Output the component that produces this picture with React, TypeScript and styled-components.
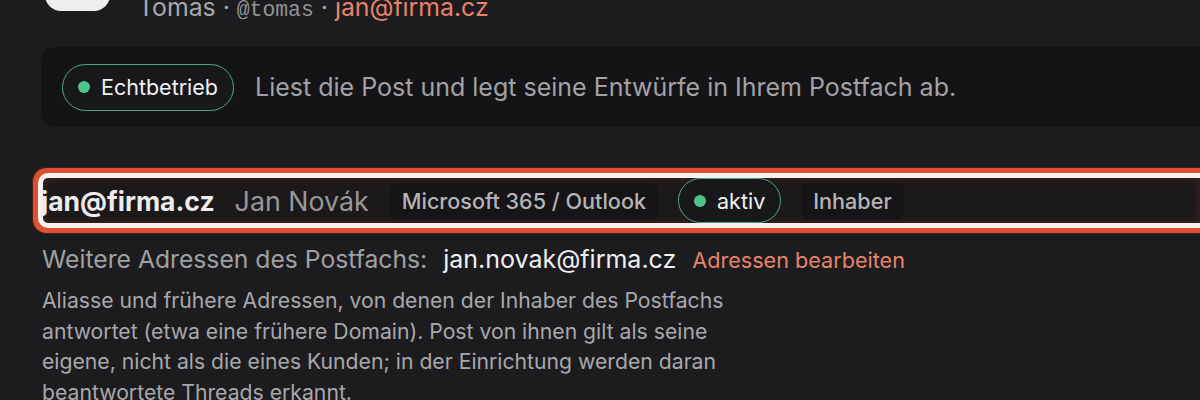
import React from "react";
import styled, { createGlobalStyle } from "styled-components";

const Global = createGlobalStyle`
  html, body { margin: 0; padding: 0; background: #1c1c1f; }
  body { font-family: Inter, "Noto Sans", sans-serif; color: #e6e6e8; overflow: hidden; }
`;

const Page = styled.div`
  width: 1200px;
  height: 400px;
  overflow: hidden;
  padding: 0 0 0 42px;
  box-sizing: border-box;
  display: flex;
  flex-direction: column;
`;

const Header = styled.div`
  display: flex;
  align-items: flex-end;
  gap: 28px;
  height: 65px;
  margin-top: -54px;
  margin-left: 3px;
`;

const Avatar = styled.div`
  width: 65px;
  height: 65px;
  border-radius: 16px;
  background: #efefef;
  flex: none;
`;

const Meta = styled.div`
  font-size: 24.8px;
  color: #a8a8ac;
  line-height: 30px;
  margin-bottom: -14px;
  white-space: pre;
`;

const Mono = styled.span`
  font-family: "Liberation Mono", "DejaVu Sans Mono", monospace;
  font-size: 21.4px;
  color: #929296;
`;

const Accent = styled.span<{ $size?: number }>`
  color: #e8836a;
  font-size: ${(p) => p.$size ?? 24.8}px;
`;

const Panel = styled.div`
  margin-top: 36px;
  margin-left: -1px;
  height: 80px;
  flex: none;
  background: #141416;
  border-radius: 14px 0 0 14px;
  display: flex;
  align-items: center;
  padding-left: 21px;
  gap: 21px;
`;

const Pill = styled.div<{ $h: number }>`
  height: ${(p) => p.$h}px;
  box-sizing: border-box;
  border: 1.5px solid #4ea884;
  border-radius: 999px;
  display: flex;
  align-items: center;
  gap: 11px;
  padding: 0 15px 0 15px;
  font-size: 21.5px;
  color: #f2f2f4;
  background: #18181a;
  flex: none;
`;

const Dot = styled.span`
  width: 12px;
  height: 12px;
  border-radius: 50%;
  background: #4cc38a;
  flex: none;
`;

const Desc = styled.div`
  font-size: 25px;
  color: #a2a2a6;
  white-space: nowrap;
`;

const Row = styled.div`
  margin-top: 51px;
  margin-left: 1px;
  height: 45px;
  flex: none;
  display: flex;
  align-items: center;
  gap: 20px;
  border-radius: 5px 0 0 5px;
  background: #1c191b;
  box-shadow: inset 0 0 10px rgba(190, 70, 40, 0.28), 0 0 0 5px #f7f2ef,
    0 0 0 10px #de4f33, 0 0 0 11px rgba(110, 40, 20, 0.5);
`;

const Email = styled.div`
  font-size: 26.5px;
  font-weight: 700;
  color: #ececee;
  margin-left: -2px;
`;

const Name = styled.div`
  font-size: 26.8px;
  color: #98989c;
  margin-right: 1px;
`;

const Chip = styled.div`
  height: 36px;
  display: flex;
  align-items: center;
  padding: 0 12px;
  border-radius: 8px;
  background: #161416;
  font-size: 21.6px;
  font-weight: 500;
  color: #b4b4b8;
  flex: none;
`;

const AddrLine = styled.div`
  margin-top: 21px;
  display: flex;
  align-items: baseline;
  gap: 16px;
  font-size: 24.7px;
  line-height: 30px;
  white-space: nowrap;
`;

const Label = styled.span`
  color: #a0a0a4;
`;

const Value = styled.span`
  color: #f0f0f2;
  font-size: 25px;
`;

const Para = styled.p`
  margin: 10px 0 0;
  width: 745px;
  font-size: 21.2px;
  line-height: 30.5px;
  color: #a8a8ac;
`;

export default function App() {
  return (
    <>
      <Global />
      <Page>
        <Header>
          <Avatar />
          <Meta>
            Tomas · <Mono>@tomas</Mono> · <Accent>jan@firma.cz</Accent>
          </Meta>
        </Header>
        <Panel>
          <Pill $h={47}>
            <Dot />
            Echtbetrieb
          </Pill>
          <Desc>Liest die Post und legt seine Entwürfe in Ihrem Postfach ab.</Desc>
        </Panel>
        <Row>
          <Email>jan@firma.cz</Email>
          <Name>Jan Novák</Name>
          <Chip>Microsoft 365 / Outlook</Chip>
          <Pill $h={45}>
            <Dot />
            aktiv
          </Pill>
          <Chip>Inhaber</Chip>
        </Row>
        <AddrLine>
          <Label>Weitere Adressen des Postfachs:</Label>
          <Value>jan.novak@firma.cz</Value>
          <Accent $size={21.6}>Adressen bearbeiten</Accent>
        </AddrLine>
        <Para>
          Aliasse und frühere Adressen, von denen der Inhaber des Postfachs antwortet (etwa eine
          frühere Domain). Post von ihnen gilt als seine eigene, nicht als die eines Kunden; in der
          Einrichtung werden daran beantwortete Threads erkannt.
        </Para>
      </Page>
    </>
  );
}
